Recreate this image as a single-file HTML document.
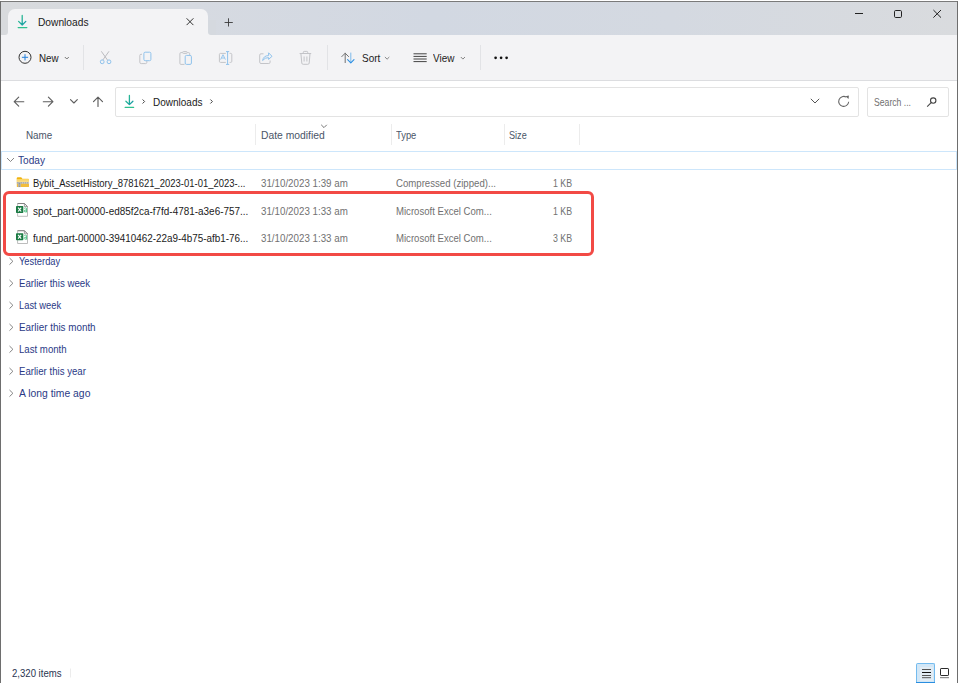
<!DOCTYPE html>
<html><head><meta charset="utf-8">
<style>
html,body{margin:0;padding:0;}
body{width:958px;height:683px;overflow:hidden;background:#fff;position:relative;font-family:"Liberation Sans",sans-serif;}
.a{position:absolute;}
.t{position:absolute;white-space:nowrap;line-height:1;transform-origin:0 0;}
svg{position:absolute;overflow:visible;}
</style></head><body>
<!-- window frame -->
<div class=a style="left:0;top:1px;width:958px;height:1px;background:#7a7a7a"></div>
<div class=a style="left:0;top:1px;width:1px;height:682px;background:#6e6e6e"></div>
<div class=a style="left:957px;top:1px;width:1px;height:682px;background:#6e6e6e"></div>
<!-- titlebar -->
<div class=a style="left:1px;top:2px;width:956px;height:33px;background:linear-gradient(90deg,#d8dadd 0%,#d6dae1 20%,#d2d8e2 45%,#d4d9e1 70%,#d9dbde 100%)"></div>
<!-- tab (with bottom flare) -->
<div class=a style="left:4px;top:31px;width:208px;height:4px;background:#f3f3f5"></div>
<div class=a style="left:1px;top:2px;width:7px;height:33px;background:#d8dadd;border-bottom-right-radius:3px"></div>
<div class=a style="left:208px;top:20px;width:8px;height:15px;background:#d5d9df;border-bottom-left-radius:3px"></div>
<div class=a style="left:8px;top:9px;width:200px;height:26px;background:#f3f3f5;border-radius:7px 7px 0 0"></div>
<!-- toolbar -->
<div class=a style="left:1px;top:35px;width:956px;height:45px;background:#f3f3f5"></div>
<div class=a style="left:1px;top:80px;width:956px;height:1px;background:#dcdde0"></div>
<!-- address box -->
<div class=a style="left:115px;top:87px;width:742px;height:28px;border:1px solid #e3e3e3;border-radius:2px"></div>
<div class=a style="left:867px;top:87px;width:80px;height:28px;border:1px solid #e3e3e3;border-radius:2px"></div>
<!-- header separators -->
<div class=a style="left:255px;top:124px;width:1px;height:21px;background:#ececec"></div>
<div class=a style="left:391px;top:124px;width:1px;height:21px;background:#ececec"></div>
<div class=a style="left:504px;top:124px;width:1px;height:21px;background:#ececec"></div>
<div class=a style="left:579px;top:124px;width:1px;height:21px;background:#ececec"></div>
<!-- Today group box -->
<div class=a style="left:1px;top:151px;width:954px;height:17px;border:1px solid #cde6fb"></div>
<!-- red highlight box -->
<div class=a style="left:3px;top:191px;width:585px;height:59px;border:3px solid #f24a45;border-radius:6px"></div>
<!-- status bar view buttons -->
<div class=a style="left:916px;top:663px;width:17px;height:20px;background:#d2e7f7;border:1px solid #74bbee;border-bottom:none;border-radius:2px 2px 0 0"></div>
<div class=a style="left:920px;top:667px;width:13px;height:14px;background:#e2ecf4"></div>
<div class=a style="left:916px;top:682px;width:19px;height:1px;background:#2a8ee0"></div>

<!-- ICONS -->
<!-- tab download icon -->
<svg style="left:0;top:0" width="958" height="683" viewBox="0 0 958 683">
  <defs>
    <linearGradient id="dg" x1="0" y1="0" x2="1" y2="1">
      <stop offset="0" stop-color="#31c48d"/><stop offset="1" stop-color="#1597a8"/>
    </linearGradient>
  </defs>
  <g fill="none" stroke="url(#dg)" stroke-width="1.3" stroke-linecap="round" stroke-linejoin="round">
    <path d="M22.2 15.5 V25 M18.6 21.4 L22.2 25 L25.8 21.4"/>
    <path d="M18.2 27.6 H26.8" stroke="#2ec08e" stroke-width="1.4"/>
  </g>
  <!-- tab close X -->
  <path d="M186.6 18.3 L193.4 25.1 M193.4 18.3 L186.6 25.1" stroke="#333" stroke-width="1" fill="none"/>
  <!-- new tab + -->
  <path d="M228.5 18.3 V26.5 M224.6 22.5 H232.8" stroke="#3a3a3a" stroke-width="0.9" fill="none"/>
  <!-- minimize -->
  <path d="M855 13.5 H863" stroke="#222" stroke-width="1" fill="none"/>
  <!-- maximize -->
  <rect x="894.5" y="10.5" width="7" height="7" rx="1.2" stroke="#222" stroke-width="1" fill="none"/>
  <!-- close -->
  <path d="M933.4 10 L941 17.6 M941 10 L933.4 17.6" stroke="#222" stroke-width="1" fill="none"/>

  <!-- New circle plus -->
  <circle cx="25" cy="57.3" r="6" stroke="#333" stroke-width="1" fill="none"/>
  <path d="M25 54.2 V60.4 M21.9 57.3 H28.1" stroke="#2480dc" stroke-width="1" fill="none"/>
  <!-- New chevron -->
  <path d="M64.8 57 L66.8 59 L68.8 57" stroke="#666" stroke-width="0.9" fill="none"/>
  <!-- separators -->
  <path d="M83.5 45 V70 M327.5 45 V70 M480.5 45 V70" stroke="#e2e3e6" stroke-width="1" fill="none"/>
  <!-- scissors (disabled) -->
  <g stroke="#b4b6ba" stroke-width="0.9" fill="none">
    <path d="M101.3 51.3 L107.6 60.2 M109 51.3 L102.7 60.2"/>
  </g>
  <g stroke="#8fc2ec" stroke-width="1" fill="none">
    <circle cx="102.2" cy="61.8" r="1.9"/><circle cx="109" cy="61.8" r="1.9"/>
  </g>
  <!-- copy -->
  <g stroke-width="1" fill="none">
    <path d="M142 54.3 H141 Q139.8 54.3 139.8 55.5 V62.2 Q139.8 63.6 141.2 63.6 H145.5 Q146.8 63.6 146.8 62.5 V61" stroke="#c3c4c8"/>
    <rect x="143.9" y="52.2" width="7" height="8.5" rx="1.3" stroke="#8fc2ec"/>
  </g>
  <!-- paste -->
  <g stroke-width="1" fill="none">
    <path d="M182.3 52.6 H181 Q179.9 52.6 179.9 53.7 V63.4 Q179.9 64.4 181 64.4 H184.5 M187.3 52.6 H188.6 Q189.7 52.6 189.7 53.7 V55" stroke="#c3c4c8"/>
    <rect x="182.6" y="51.6" width="4.6" height="1.8" rx="0.8" stroke="#c3c4c8"/>
    <rect x="185.2" y="55.4" width="6.2" height="9" rx="1.3" stroke="#8fc2ec"/>
  </g>
  <!-- rename -->
  <g stroke-width="1" fill="none">
    <path d="M225.8 53.4 H220.5 Q219.4 53.4 219.4 54.5 V61.3 Q219.4 62.4 220.5 62.4 H225.8 M229.6 53.4 H230.7 Q231.8 53.4 231.8 54.5 V61.3 Q231.8 62.4 230.7 62.4 H229.6" stroke="#c3c4c8"/>
    <path d="M227.6 51.6 V64.4 M226 51.6 H229.2 M226 64.4 H229.2" stroke="#8fc2ec"/>
    <path d="M220.6 59.6 L223 54.7 L225.4 59.6 M221.5 58 H224.5" stroke="#8fc2ec" stroke-width="0.9"/>
  </g>
  <!-- share -->
  <g stroke-width="1" fill="none">
    <path d="M263.5 53.8 H261 Q259.7 53.8 259.7 55.1 V62.2 Q259.7 63.5 261 63.5 H268.8 Q270.1 63.5 270.1 62.2 V60.5" stroke="#c3c4c8"/>
    <path d="M262.6 60.5 Q263.5 55.6 268.6 55.6 V52.8 L272 56.3 L268.6 59.4 V57.6 Q265 57.4 262.6 60.5 Z" stroke="#8fc2ec" stroke-linejoin="round"/>
  </g>
  <!-- delete -->
  <g stroke="#c3c4c8" stroke-width="1" fill="none">
    <path d="M299.6 53.5 H311.2 M303.3 53.5 V52.3 Q303.3 51.4 304.2 51.4 H306.8 Q307.7 51.4 307.7 52.3 V53.5"/>
    <path d="M300.9 53.5 L301.8 63.1 Q301.9 64.3 303.2 64.3 H307.8 Q309.1 64.3 309.2 63.1 L310 53.5"/>
    <path d="M304.1 56.5 V61.5 M306.9 56.5 V61.5"/>
  </g>
  <!-- sort icon -->
  <g stroke-width="1.1" fill="none" stroke-linecap="round" stroke-linejoin="round">
    <path d="M345.2 53.2 V62.6 M341.8 56.6 L345.2 53.2 L348.6 56.6" stroke="#6a6a6a" stroke-width="0.95"/>
    <path d="M350.8 53 V62.6" stroke="#7db9ec" stroke-width="1"/>
    <path d="M347.6 59.6 L350.8 62.8 L354 59.6" stroke="#2b8fe3" stroke-width="1.1"/>
  </g>
  <path d="M384.9 57 L387.1 59.2 L389.3 57" stroke="#777" stroke-width="0.9" fill="none"/>
  <!-- view icon -->
  <path d="M413.5 53.8 H426.7 M413.5 56.4 H426.7 M413.5 59 H426.7 M413.5 61.6 H426.7" stroke="#444" stroke-width="1" fill="none"/>
  <path d="M460.8 57 L462.9 59.1 L465 57" stroke="#777" stroke-width="0.9" fill="none"/>
  <!-- more dots -->
  <g fill="#111"><circle cx="495.6" cy="57.8" r="1.35"/><circle cx="501.1" cy="57.8" r="1.35"/><circle cx="506.6" cy="57.8" r="1.35"/></g>

  <!-- nav arrows -->
  <g stroke="#5e5e5e" stroke-width="1.15" fill="none" stroke-linecap="round" stroke-linejoin="round">
    <path d="M14.2 101.7 H23.8 M18.7 97.2 L14.2 101.7 L18.7 106.2"/>
    <path d="M43.3 101.7 H52.9 M48.4 97.2 L52.9 101.7 L48.4 106.2"/>
    <path d="M70.5 99.7 L73.9 103 L77.3 99.7"/>
    <path d="M98 97.2 V106.4 M93.5 101.7 L98 97.2 L102.5 101.7"/>
  </g>
  <!-- address download icon -->
  <g fill="none" stroke="url(#dg)" stroke-width="1.3" stroke-linecap="round" stroke-linejoin="round">
    <path d="M129.4 95.4 V104.6 M125.9 101.2 L129.4 104.6 L132.9 101.2"/>
    <path d="M125.2 107.4 H133.6" stroke="#2ec08e" stroke-width="1.3"/>
  </g>
  <path d="M142.6 99.5 L144.6 101.5 L142.6 103.5 M210.4 99.5 L212.4 101.5 L210.4 103.5" stroke="#444" stroke-width="1" fill="none"/>
  <!-- address right chevron & refresh -->
  <path d="M810.8 98.8 L815 103 L819.2 98.8" stroke="#555" stroke-width="1" fill="none"/>
  <path d="M848.7 101.8 A5 5 0 1 1 846.3 97.1" stroke="#666" stroke-width="1.05" fill="none"/>
  <path d="M845.6 96.2 L848.9 95.6 L848.5 99 Z" fill="#666"/>
  <!-- search glyph -->
  <g stroke="#444" stroke-width="1.1" fill="none">
    <circle cx="933.2" cy="100.6" r="2.7"/>
    <path d="M931.2 102.7 L927.2 106.6"/>
  </g>
  <!-- header sort chevron -->
  <path d="M321.2 124.8 L324 127.6 L326.8 124.8" stroke="#666" stroke-width="0.9" fill="none"/>
  <!-- Today chevron -->
  <path d="M7 158 L10.5 161.5 L14 158" stroke="#777" stroke-width="0.9" fill="none"/>
  <!-- group chevrons -->
  <g stroke="#777" stroke-width="0.9" fill="none">
    <path d="M9.5 258 L12.9 261.3 L9.5 264.6"/>
    <path d="M9.5 280 L12.9 283.3 L9.5 286.6"/>
    <path d="M9.5 302 L12.9 305.3 L9.5 308.6"/>
    <path d="M9.5 324 L12.9 327.3 L9.5 330.6"/>
    <path d="M9.5 346 L12.9 349.3 L9.5 352.6"/>
    <path d="M9.5 368 L12.9 371.3 L9.5 374.6"/>
    <path d="M9.5 390 L12.9 393.3 L9.5 396.6"/>
  </g>
  <!-- folder (zip) icon -->
  <g>
    <path d="M16.8 178.2 Q16.8 177.4 17.6 177.4 H21.2 L22.4 178.8 H28.2 Q29 178.8 29 179.6 V186.4 Q29 187.1 28.2 187.1 H17.6 Q16.8 187.1 16.8 186.4 Z" fill="#f2bd3c"/>
    <path d="M16.8 178.2 Q16.8 177.4 17.6 177.4 H21.2 L22.4 178.8 H16.8 Z" fill="#f0b000"/>
    <rect x="16.8" y="179" width="12.2" height="1.3" fill="#fcd45e"/>
    <rect x="16.8" y="180.3" width="12.2" height="1.6" fill="#fbe08c"/>
    <rect x="16.8" y="182" width="12.2" height="1.8" fill="#c9c9c4"/>
    <path d="M17 182.9 H29" stroke="#7d8290" stroke-width="0.6" stroke-dasharray="1 1"/>
    <rect x="18" y="182" width="2.8" height="5.1" fill="#b7b7b0"/>
    <path d="M19.4 183 V187" stroke="#6f6f68" stroke-width="0.6" stroke-dasharray="0.8 0.8"/>
    <rect x="16.8" y="184" width="12.2" height="3.1" fill="#f6c842" opacity="0"/>
  </g>
  <!-- excel icons -->
  <g id="xl1">
    <path d="M17.6 203.5 H24.4 L27.5 206.6 V216.3 H17.6 Z" fill="#fff" stroke="#b5b5b5" stroke-width="0.9"/>
    <path d="M17.6 203.5 H24.4 L27.5 206.6" fill="none" stroke="#7d7d7d" stroke-width="0.9"/>
    <path d="M24.4 203.5 V206.6 H27.5" fill="none" stroke="#8a8a8a" stroke-width="0.8"/>
    <rect x="16" y="206.1" width="7.3" height="6.9" rx="0.7" fill="#1a7a43"/>
    <path d="M18.1 207.7 L21.2 211.5 M21.2 207.7 L18.1 211.5" stroke="#fff" stroke-width="1.15"/>
    <path d="M24.3 208.3 Q25.5 207.6 26.6 208.3 V212.3 M26.6 210 Q24.2 209.6 24.2 211.2 Q24.3 212.5 26.6 211.7" fill="none" stroke="#45c07e" stroke-width="0.9"/>
  </g>
  <g transform="translate(0,27.2)">
    <path d="M17.6 203.5 H24.4 L27.5 206.6 V216.3 H17.6 Z" fill="#fff" stroke="#b5b5b5" stroke-width="0.9"/>
    <path d="M17.6 203.5 H24.4 L27.5 206.6" fill="none" stroke="#7d7d7d" stroke-width="0.9"/>
    <path d="M24.4 203.5 V206.6 H27.5" fill="none" stroke="#8a8a8a" stroke-width="0.8"/>
    <rect x="16" y="206.1" width="7.3" height="6.9" rx="0.7" fill="#1a7a43"/>
    <path d="M18.1 207.7 L21.2 211.5 M21.2 207.7 L18.1 211.5" stroke="#fff" stroke-width="1.15"/>
    <path d="M24.3 208.3 Q25.5 207.6 26.6 208.3 V212.3 M26.6 210 Q24.2 209.6 24.2 211.2 Q24.3 212.5 26.6 211.7" fill="none" stroke="#45c07e" stroke-width="0.9"/>
  </g>
  <!-- status bar icons -->
  <path d="M70.5 668.5 V677.5" stroke="#ececec" stroke-width="1" fill="none"/>
  <path d="M922 669.5 H931 M922 672.5 H931 M922 675.5 H931 M922 677.7 H931" stroke="#555" stroke-width="1" fill="none"/>
  <path d="M922 672.5 H931" stroke="#111" stroke-width="1" fill="none"/>
  <rect x="940.5" y="668.5" width="8" height="7" rx="0.6" stroke="#2a2a2a" stroke-width="1" fill="#fff"/>
  <path d="M940 677.7 H949" stroke="#777" stroke-width="1" fill="none"/>
</svg>
<div class=t style="left:37.50px;top:17px;font-size:10.5px;color:#1b1b1b;transform:scaleX(0.9720);">Downloads</div>
<div class=t style="left:39.00px;top:53px;font-size:10.5px;color:#1b1b1b;transform:scaleX(0.9326);">New</div>
<div class=t style="left:361.50px;top:53px;font-size:10.5px;color:#1b1b1b;transform:scaleX(0.9499);">Sort</div>
<div class=t style="left:433.10px;top:53px;font-size:10.5px;color:#1b1b1b;transform:scaleX(0.9478);">View</div>
<div class=t style="left:152.80px;top:97px;font-size:10.5px;color:#1b1b1b;transform:scaleX(0.9528);">Downloads</div>
<div class=t style="left:873.80px;top:97px;font-size:10.5px;color:#707070;transform:scaleX(0.8231);">Search ...</div>
<div class=t style="left:25.50px;top:130px;font-size:10.5px;color:#4a5568;transform:scaleX(0.9388);">Name</div>
<div class=t style="left:261.10px;top:130px;font-size:10.5px;color:#4a5568;transform:scaleX(0.9831);">Date modified</div>
<div class=t style="left:395.80px;top:130px;font-size:10.5px;color:#4a5568;transform:scaleX(0.8917);">Type</div>
<div class=t style="left:508.50px;top:130px;font-size:10.5px;color:#4a5568;transform:scaleX(0.8661);">Size</div>
<div class=t style="left:18.30px;top:155px;font-size:10.5px;color:#2a3a86;transform:scaleX(0.9632);">Today</div>
<div class=t style="left:32.90px;top:178px;font-size:10.5px;color:#1b1b1b;transform:scaleX(0.9011);">Bybit_AssetHistory_8781621_2023-01-01_2023-...</div>
<div class=t style="left:260.70px;top:178px;font-size:10.5px;color:#717171;transform:scaleX(0.9291);">31/10/2023 1:39 am</div>
<div class=t style="left:396.30px;top:178px;font-size:10.5px;color:#717171;transform:scaleX(0.9162);">Compressed (zipped)...</div>
<div class=t style="left:553.00px;top:178px;font-size:10.5px;color:#717171;transform:scaleX(0.8390);">1 KB</div>
<div class=t style="left:32.90px;top:206px;font-size:10.5px;color:#1b1b1b;transform:scaleX(0.9457);">spot_part-00000-ed85f2ca-f7fd-4781-a3e6-757...</div>
<div class=t style="left:260.70px;top:206px;font-size:10.5px;color:#717171;transform:scaleX(0.9291);">31/10/2023 1:33 am</div>
<div class=t style="left:396.30px;top:206px;font-size:10.5px;color:#717171;transform:scaleX(0.9121);">Microsoft Excel Com...</div>
<div class=t style="left:553.00px;top:206px;font-size:10.5px;color:#717171;transform:scaleX(0.8390);">1 KB</div>
<div class=t style="left:32.90px;top:233px;font-size:10.5px;color:#1b1b1b;transform:scaleX(0.9408);">fund_part-00000-39410462-22a9-4b75-afb1-76...</div>
<div class=t style="left:260.70px;top:233px;font-size:10.5px;color:#717171;transform:scaleX(0.9291);">31/10/2023 1:33 am</div>
<div class=t style="left:396.30px;top:233px;font-size:10.5px;color:#717171;transform:scaleX(0.9121);">Microsoft Excel Com...</div>
<div class=t style="left:553.00px;top:233px;font-size:10.5px;color:#717171;transform:scaleX(0.8390);">3 KB</div>
<div class=t style="left:18.60px;top:256px;font-size:10.5px;color:#2a3a86;transform:scaleX(0.8896);">Yesterday</div>
<div class=t style="left:18.60px;top:278px;font-size:10.5px;color:#2a3a86;transform:scaleX(0.9217);">Earlier this week</div>
<div class=t style="left:18.60px;top:300px;font-size:10.5px;color:#2a3a86;transform:scaleX(0.8904);">Last week</div>
<div class=t style="left:18.60px;top:322px;font-size:10.5px;color:#2a3a86;transform:scaleX(0.9375);">Earlier this month</div>
<div class=t style="left:18.60px;top:344px;font-size:10.5px;color:#2a3a86;transform:scaleX(0.9169);">Last month</div>
<div class=t style="left:18.60px;top:366px;font-size:10.5px;color:#2a3a86;transform:scaleX(0.9169);">Earlier this year</div>
<div class=t style="left:18.60px;top:388px;font-size:10.5px;color:#2a3a86;transform:scaleX(0.9863);">A long time ago</div>
<div class=t style="left:12.30px;top:668px;font-size:10.5px;color:#2a3550;transform:scaleX(0.9119);">2,320 items</div>
</body></html>
